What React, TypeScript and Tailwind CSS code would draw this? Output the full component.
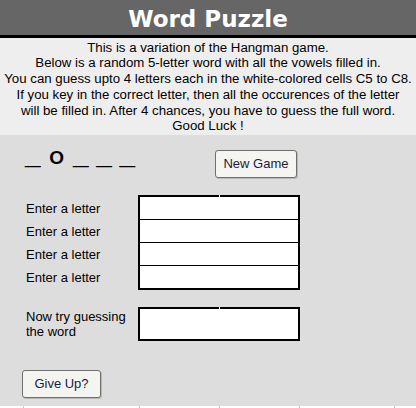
export default function App() {
  const intro = [
    "This is a variation of the Hangman game.",
    "Below is a random 5-letter word with all the vowels filled in.",
    "You can guess upto 4 letters each in the white-colored cells C5 to C8.",
    "If you key in the correct letter, then all the occurences of the letter",
    "will be filled in. After 4 chances, you have to guess the full word.",
    "Good Luck !",
  ];

  return (
    <div className="w-[416px] h-[408px] overflow-hidden bg-[#dddddd] font-['Liberation_Sans',Arial,sans-serif] text-[13px] text-black">
      {/* Title */}
      <div className="h-[38px] bg-[#666666] border-b-[3px] border-black pt-[3px] text-center text-white font-bold text-[23px] leading-[32px] font-['DejaVu_Sans',sans-serif]">
        Word Puzzle
      </div>

      {/* Instructions */}
      <div className="h-[97px] bg-[#eeeeee] pt-[1.5px] text-center text-[13.25px] leading-[15.8px]">
        {intro.map((line) => (
          <div key={line}>{line}</div>
        ))}
      </div>

      {/* Game area */}
      <div className="h-[271px] flex flex-col">
        <div className="flex h-[60px]">
          <div className="w-[215px] h-[34px] pl-[25px] pt-[6px] text-[28px] leading-[28px] font-bold whitespace-pre">
            {"_ "}
            <span className="text-[19px] mx-[1px]">O</span>
            {" _ _ _"}
          </div>
          <button className="mt-[15px] h-[28px] w-[82px] rounded-[3px] border border-[#707070] bg-[#f4f4f0] shadow-[1px_1px_0_#b8b8b8] text-[13px] text-[#1a1a40]">
            New Game
          </button>
        </div>

        <div className="flex">
          <div className="w-[138px] pl-[26px] pt-[2px]">
            {[0, 1, 2, 3].map((i) => (
              <div key={i} className="h-[23px] flex items-center">
                Enter a letter
              </div>
            ))}
          </div>
          <div className="relative w-[162px] border-2 border-black bg-white">
            <div className="absolute top-[-2px] left-[79px] w-[1px] h-[2px] bg-white" />
            <div className="h-[22px]" />
            <div className="h-[23px] border-t border-black" />
            <div className="h-[23px] border-t border-black" />
            <div className="h-[23px] border-t border-black" />
          </div>
        </div>

        <div className="flex mt-[17px]">
          <div className="w-[138px] pl-[26px] pt-[2px] leading-[15.3px]">
            <div className="w-[110px]">Now try guessing the word</div>
          </div>
          <div className="relative w-[162px] h-[34px] border-2 border-black bg-white">
            <div className="absolute top-[-2px] left-[79px] w-[1px] h-[2px] bg-white" />
          </div>
        </div>

        <button className="mt-[29px] ml-[22px] h-[28px] w-[79px] rounded-[3px] border border-[#707070] bg-[#f4f4f0] shadow-[1px_1px_0_#b8b8b8] text-[13px] text-[#1a1a40]">
          Give Up?
        </button>
      </div>

      {/* next sheet row */}
      <div className="h-[2px] flex bg-white">
        <div className="w-[23px]" />
        <div className="w-[116px] border-l border-[#c8c8c8]" />
        <div className="w-[80px] border-l border-[#c8c8c8]" />
        <div className="w-[80px] border-l border-[#c8c8c8]" />
        <div className="w-[95px] border-l border-[#c8c8c8]" />
        <div className="flex-1 border-l border-[#c8c8c8]" />
      </div>
    </div>
  );
}
